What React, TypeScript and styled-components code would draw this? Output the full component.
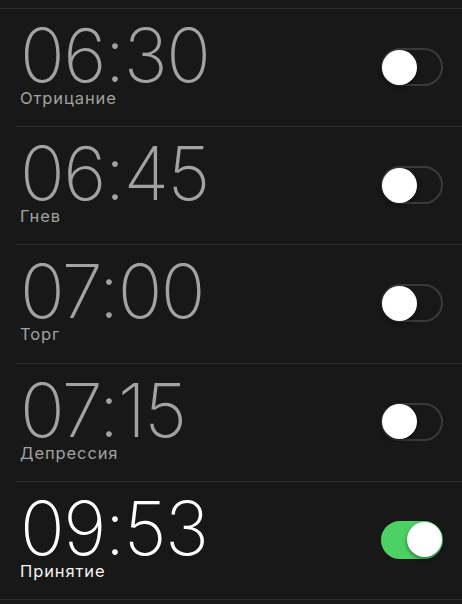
import React from "react";
import styled, { createGlobalStyle } from "styled-components";

const Global = createGlobalStyle`
  html, body { margin: 0; padding: 0; background: #121212; }
  body { font-family: Inter, "Noto Sans", sans-serif; }
`;

const Screen = styled.div`
  width: 462px;
  height: 604px;
  background: #181818;
  overflow: hidden;
  display: flex;
  flex-direction: column;
`;

const TopStrip = styled.div`
  height: 9px;
  flex: none;
  border-bottom: 1px solid #2c2c2c;
  box-sizing: border-box;
`;

const List = styled.div`
  display: flex;
  flex-direction: column;
`;

const Row = styled.div`
  height: 118.2px;
  flex: none;
  box-sizing: border-box;
  display: flex;
  align-items: center;
  justify-content: space-between;
  padding: 0 19px 0 20px;
  position: relative;
  &::after {
    content: "";
    position: absolute;
    left: 16px;
    right: 0;
    bottom: 0;
    height: 1px;
    background: #2c2c2c;
  }
  &:last-child::after { left: 0; }
`;

const Info = styled.div`
  display: flex;
  flex-direction: column;
  gap: 4px;
  padding-bottom: 2px;
`;

const Time = styled.div<{ $on: boolean }>`
  font-family: Inter, sans-serif;
  font-weight: 200;
  font-size: 74px;
  line-height: 58px;
  letter-spacing: -1.5px;
  margin-left: 0px;
  color: ${(p) => (p.$on ? "#ffffff" : "#a2a2a2")};
`;

const Label = styled.div<{ $on: boolean }>`
  font-family: Inter, sans-serif;
  font-size: 16.5px;
  line-height: 20px;
  letter-spacing: 0.9px;
  color: ${(p) => (p.$on ? "#f4f4f4" : "#a2a2a2")};
`;

const Track = styled.div<{ $on: boolean }>`
  width: 62px;
  height: 38px;
  box-sizing: border-box;
  border-radius: 19px;
  border: 2px solid ${(p) => (p.$on ? "#4cd263" : "#3a3a3a")};
  background: ${(p) => (p.$on ? "#4cd263" : "transparent")};
  display: flex;
  align-items: center;
  justify-content: ${(p) => (p.$on ? "flex-end" : "flex-start")};
  margin-top: -2px;
`;

const Knob = styled.div`
  width: 35px;
  height: 35px;
  border-radius: 50%;
  background: #ffffff;
  box-shadow: 0 2px 4px rgba(0, 0, 0, 0.45);
  margin: 0 -1px;
`;

const alarms = [
  { time: "06:30", label: "Отрицание", on: false },
  { time: "06:45", label: "Гнев", on: false },
  { time: "07:00", label: "Торг", on: false },
  { time: "07:15", label: "Депрессия", on: false },
  { time: "09:53", label: "Принятие", on: true },
];

export default function App() {
  return (
    <Screen>
      <Global />
      <TopStrip />
      <List>
        {alarms.map((a) => (
          <Row key={a.time}>
            <Info>
              <Time $on={a.on}>{a.time}</Time>
              <Label $on={a.on}>{a.label}</Label>
            </Info>
            <Track $on={a.on}>
              <Knob />
            </Track>
          </Row>
        ))}
      </List>
    </Screen>
  );
}
